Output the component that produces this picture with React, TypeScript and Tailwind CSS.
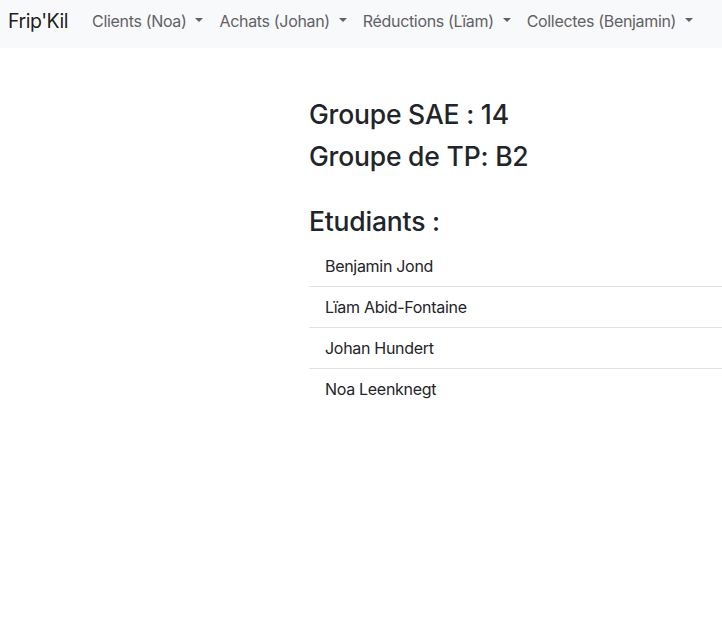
import React from "react";

const links = ["Clients (Noa)", "Achats (Johan)", "Réductions (Lïam)", "Collectes (Benjamin)"];
const students = ["Benjamin Jond", "Lïam Abid-Fontaine", "Johan Hundert", "Noa Leenknegt"];

function Caret() {
  return (
    <span className="ml-[9px] inline-block align-[5px] border-t-[4px] border-t-current border-x-[4px] border-x-transparent w-0 h-0" />
  );
}

export default function App() {
  return (
    <div className="min-h-[641px] bg-white text-[#212529]" style={{ fontFamily: "Inter, 'Noto Sans', 'Liberation Sans', sans-serif" }}>
      <nav className="h-[48px] bg-[#f8f9fa] flex items-start pl-2">
        <span className="mt-[6px] text-[19.5px] leading-[30px] tracking-[-0.45px] text-[#000000e6] mr-4">Frip'Kil</span>
        <ul className="flex items-center mt-[9px]">
          {links.map((l) => (
            <li key={l} className="px-2 text-[16px] leading-6 tracking-[-0.33px] text-[#5f6265] whitespace-nowrap">
              {l}
              <Caret />
            </li>
          ))}
        </ul>
      </nav>
      <main className="pl-[309px] pt-[49px]">
        <h2 className="text-[26.5px] leading-[34px] tracking-[-0.2px] font-medium mb-2">Groupe SAE : 14</h2>
        <h2 className="text-[26.5px] leading-[34px] tracking-[-0.2px] font-medium mb-2">Groupe de TP: B2</h2>
        <h2 className="text-[26.5px] leading-[34px] tracking-[-0.2px] font-medium mt-[31px] mb-2">Etudiants :</h2>
        <ul className="text-[16px] leading-6 tracking-[-0.3px]">
          {students.map((s, i) => (
            <li key={s} className={`px-4 py-2 ${i < students.length - 1 ? "border-b border-[#dee2e6]" : ""}`}>
              {s}
            </li>
          ))}
        </ul>
      </main>
    </div>
  );
}
